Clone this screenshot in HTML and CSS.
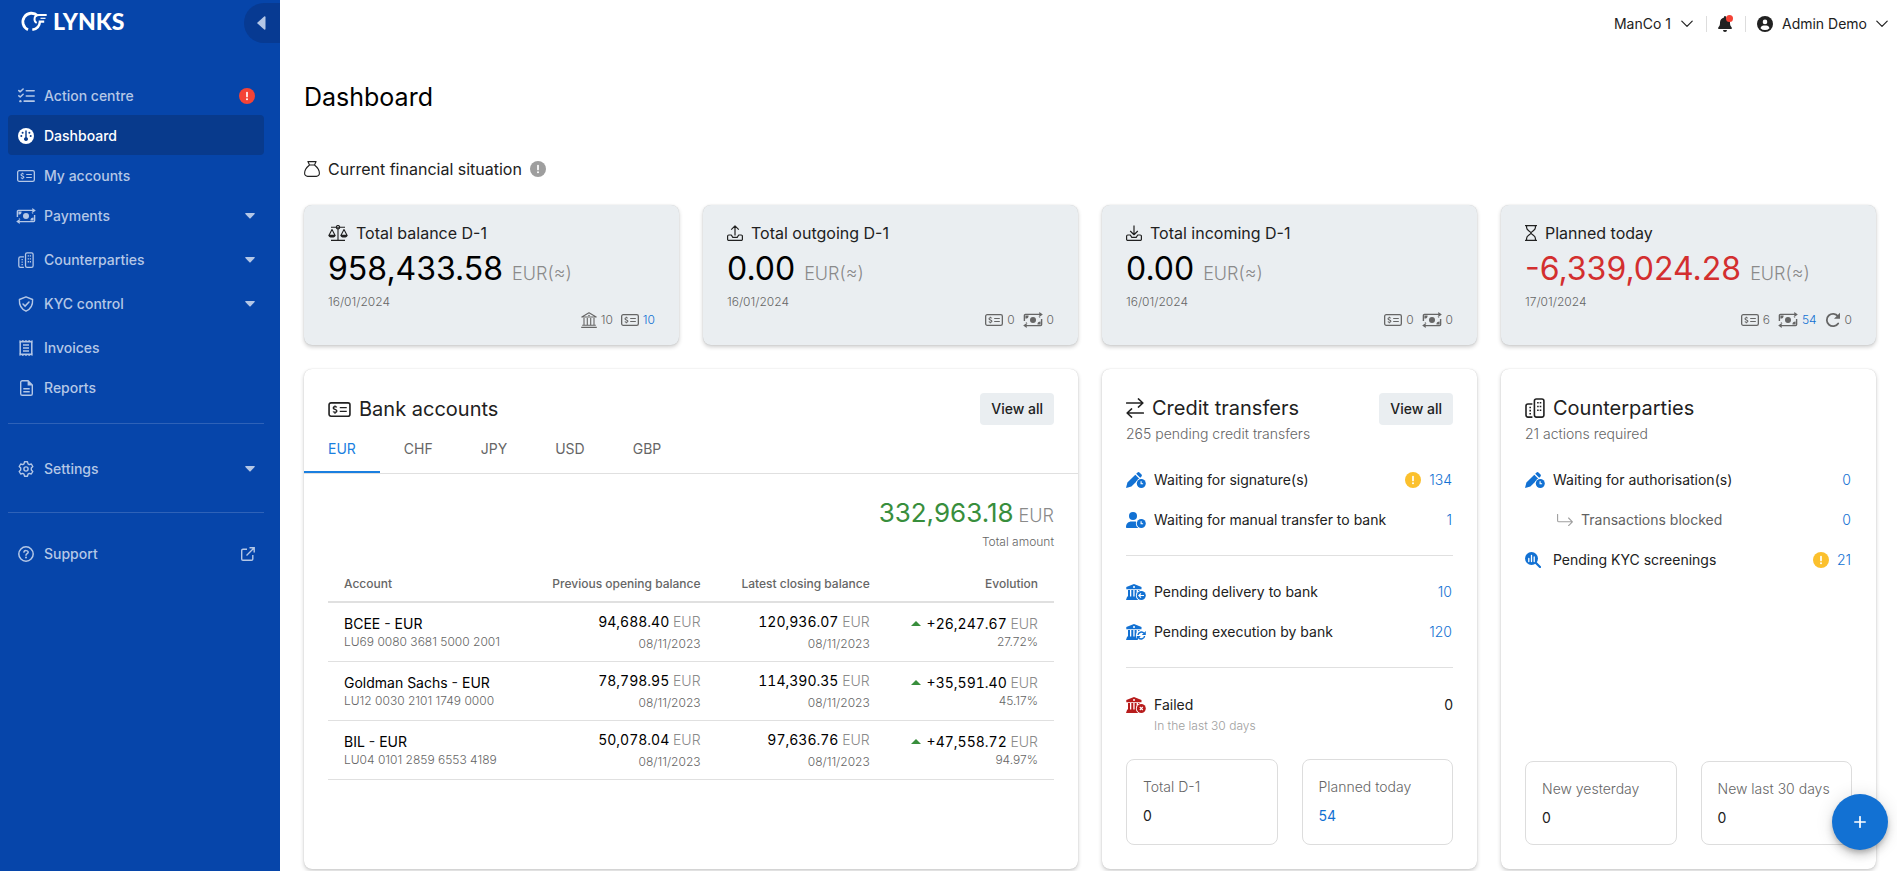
FILE: index.html
```html
<!DOCTYPE html>
<html lang="en">
<head>
<meta charset="utf-8">
<title>Lynks – Dashboard</title>
<link rel="stylesheet" href="styles.css">
</head>
<body>
<svg class="sprite" aria-hidden="true">
  <symbol id="i-tasks" viewBox="0 0 16 14"><g fill="none" stroke="currentColor" stroke-width="1.5" stroke-linecap="round" stroke-linejoin="round"><path d="M.8 2.4l1.3 1.1L4.8.9M.8 7.3l1.3 1.1 2.7-2.6M7.8 2.5h7.4M7.8 7.4h7.4M5.8 12.3h9.4"/></g><circle cx="2.3" cy="12.3" r="1.1" fill="currentColor"/></symbol>
  <symbol id="i-gauge" viewBox="0 0 16 16"><circle cx="8" cy="8" r="8" fill="currentColor"/><g fill="#083a8c"><circle cx="4.6" cy="4.7" r="1"/><circle cx="11.4" cy="4.7" r="1"/><circle cx="3.3" cy="8" r="1"/><circle cx="12.7" cy="8" r="1"/><path d="M7.3 2.6h1.4v6.6a2 2 0 1 1-1.4 0z"/></g></symbol>
  <symbol id="i-check" viewBox="0 0 18 12"><rect x=".65" y=".65" width="16.7" height="10.7" rx="1.6" fill="none" stroke="currentColor" stroke-width="1.3"/><path d="M6.8 4.3C6.3 3.5 4 3.5 4 4.8c0 1.3 2.9 1 2.9 2.4 0 1.3-2.5 1.3-3 .4M5.4 2.7v1.1M5.4 8.2v1.1M9.2 4.5h5.6M9.2 7.5h5.6" fill="none" stroke="currentColor" stroke-width="1.1"/></symbol>
  <symbol id="i-transfer" viewBox="0 0 20 16"><path d="M1.4 9V3.4a1 1 0 0 1 1-1H17M18.6 7v5.6a1 1 0 0 1-1 1H3" fill="none" stroke="currentColor" stroke-width="1.4"/><path d="M16.3 0l3.5 2.4-3.5 2.5zM3.7 16L.2 13.6l3.5-2.5zM2.4 3.4h3.2a3.2 3.2 0 0 1-3.2 3.2zM17.6 12.6h-3.2a3.2 3.2 0 0 1 3.2-3.2zM17.6 6a2 2 0 0 1-2-2zM2.4 10A2 2 0 0 1 4.400 12z" fill="currentColor"/><circle cx="10" cy="8" r="3" fill="currentColor"/></symbol>
  <symbol id="i-buildings" viewBox="0 0 20 20"><path d="M7.4 19.1H3a2 2 0 0 1-2-2V8a2 2 0 0 1 2-2h4.4M11.4 1h5.5a2 2 0 0 1 2 2v14.1a2 2 0 0 1-2 2h-5.5a2 2 0 0 1-2-2V3a2 2 0 0 1 2-2z" fill="none" stroke="currentColor" stroke-width="1.6"/><path d="M12.1 4h1.6v1.6h-1.6zM14.7 4h1.6v1.6h-1.6zM12.1 7.7h1.6v1.6h-1.6zM14.7 7.7h1.6v1.6h-1.6zM12.1 11.4h1.6V13h-1.6zM14.7 11.4h1.6V13h-1.6zM4.4 8.7H6v1.6H4.4zM4.4 11.8H6v1.6H4.4zM4.4 14.9H6v1.6H4.4z" fill="currentColor"/></symbol>
  <symbol id="i-shield" viewBox="0 0 16 16"><path d="M8 .8l6.6 2.7c.3 5-1.8 9.5-6.6 11.7C3.200 13 1.100 8.500 1.400 3.500z" fill="none" stroke="currentColor" stroke-width="1.4" stroke-linejoin="round"/><path d="M5 8l2.100 2.100L11 6" fill="none" stroke="currentColor" stroke-width="1.500" stroke-linecap="round"/></symbol>
  <symbol id="i-receipt" viewBox="0 0 14 16"><path d="M1.200 1.500V14.500M12.800 1.500V14.500M4 5h6M4 8h6M4 11h6" fill="none" stroke="currentColor" stroke-width="1.500"/><path d="M.5 0l1.700 1.100L3.800 0l1.600 1.100L7 0l1.600 1.100L10.200 0l1.600 1.100L13.500 0v2.400H.5zM.5 16l1.700-1.100L3.800 16l1.600-1.100L7 16l1.600-1.100 1.600 1.100 1.600-1.100 1.700 1.100v-2.400H.5z" fill="currentColor"/></symbol>
  <symbol id="i-file" viewBox="0 0 13 16"><path d="M8 .7H2.300A1.600 1.600 0 0 0 .7 2.300v11.400a1.600 1.600 0 0 0 1.600 1.600h8.400a1.600 1.600 0 0 0 1.600-1.600V5z" fill="none" stroke="currentColor" stroke-width="1.400"/><path d="M7.600.5v4.900h5z" fill="currentColor"/><path d="M3.300 8.700h6.400M3.300 11.700h6.400" stroke="currentColor" stroke-width="1.400"/></symbol>
  <symbol id="i-gear" viewBox="0 0 16 16"><path d="M6.500.8h3l.5 2 1.300.8 2-.6 1.500 2.500-1.500 1.500v2l1.500 1.500-1.500 2.500-2-.6-1.300.8-.5 2h-3l-.5-2-1.300-.8-2 .6L1.200 10.500 2.700 9V7L1.200 5.500 2.700 3l2 .6L6 2.800z" fill="none" stroke="currentColor" stroke-width="1.400" stroke-linejoin="round"/><circle cx="8" cy="8" r="2.100" fill="none" stroke="currentColor" stroke-width="1.400"/></symbol>
  <symbol id="i-question" viewBox="0 0 16 16"><circle cx="8" cy="8" r="7.200" fill="none" stroke="currentColor" stroke-width="1.500"/><path d="M5.900 6.100c.2-2 4.300-2 4.300.2C10.200 7.700 8 7.700 8 9.300" fill="none" stroke="currentColor" stroke-width="1.500" stroke-linecap="round"/><circle cx="8" cy="11.500" r="1" fill="currentColor"/></symbol>
  <symbol id="i-external" viewBox="0 0 14 14"><path d="M6 2.200H2a1.300 1.300 0 0 0-1.300 1.300V12A1.300 1.300 0 0 0 2 13.300h8.500a1.300 1.300 0 0 0 1.300-1.300V8M8.500.8h4.700v4.700M13 1L5.500 8.500" fill="none" stroke="currentColor" stroke-width="1.400"/></symbol>
  <symbol id="i-caret" viewBox="0 0 10 6"><path d="M.8 0h8.400q1 .2.4 1L5.600 5.300q-.6.500-1.200 0L.4 1Q-.2.200.8 0z" fill="currentColor"/></symbol>
  <symbol id="i-alert" viewBox="0 0 16 16"><circle cx="8" cy="8" r="8" fill="currentColor"/><path d="M8 4.500v4" stroke="#fff" stroke-width="1.700" stroke-linecap="round"/><circle cx="8" cy="11.200" r="1" fill="#fff"/></symbol>
  <symbol id="i-chevron" viewBox="0 0 12 8"><path d="M.8 1.200L6 6.400l5.200-5.200" fill="none" stroke="currentColor" stroke-width="1.200" stroke-linecap="round" stroke-linejoin="round"/></symbol>
  <symbol id="i-bell" viewBox="0 0 14 16"><path d="M7 0a1 1 0 0 0-1 1v.6C3.700 2.100 2 4.100 2 6.500v.7c0 1.500-.5 2.900-1.500 4l-.2.300A1 1 0 0 0 1 13h12a1 1 0 0 0 .7-1.500l-.2-.3c-1-1.100-1.500-2.500-1.500-4v-.7c0-2.400-1.700-4.400-4-4.900V1a1 1 0 0 0-1-1zM9 14H5a2 2 0 0 0 4 0z" fill="currentColor"/></symbol>
  <symbol id="i-user" viewBox="0 0 16 16"><circle cx="8" cy="8" r="8" fill="currentColor"/><circle cx="8" cy="5.900" r="2.300" fill="#fff"/><path d="M3.500 12.200c.5-1.700 1.600-2.700 3-2.700h3c1.400 0 2.500 1 3 2.700A6.200 6.200 0 0 1 8 14.100a6.200 6.200 0 0 1-4.500-1.900z" fill="#fff"/></symbol>
  <symbol id="i-sack" viewBox="0 0 16 16"><path d="M5.500 4L3.900.6h8.200L10.500 4zM5.500 4C3 6 .6 9 .6 12.300a3 3 0 0 0 3 3.100h8.800a3 3 0 0 0 3-3.100C15.400 9 13 6 10.500 4" fill="none" stroke="currentColor" stroke-width="1.100" stroke-linejoin="round"/></symbol>
  <symbol id="i-scale" viewBox="0 0 20 16"><g fill="none" stroke="currentColor" stroke-width="1.100" stroke-linejoin="round"><path d="M3 2.200h14M3 15.400h14M10 4v11.400M4 4.600L1 10.200h6zM16 4.600l-3 5.600h6z"/><circle cx="10" cy="2.200" r="1.700"/></g><path d="M.5 10h7a3.500 2.600 0 0 1-7 0zM12.500 10h7a3.500 2.600 0 0 1-7 0z" fill="currentColor"/></symbol>
  <symbol id="i-out" viewBox="0 0 16 16"><path d="M8 10.500V1M4.200 4.600L8 .9l3.800 3.700M4.300 10H1.800a1.200 1.200 0 0 0-1.200 1.200v3a1.200 1.200 0 0 0 1.200 1.200h12.400a1.200 1.200 0 0 0 1.200-1.200v-3a1.200 1.200 0 0 0-1.200-1.200h-2.500l-1.500 2.400H5.800z" fill="none" stroke="currentColor" stroke-width="1.200" stroke-linejoin="round"/></symbol>
  <symbol id="i-in" viewBox="0 0 16 16"><path d="M8 .4v9M4.200 6L8 9.700 11.800 6M4.300 10H1.800a1.200 1.200 0 0 0-1.200 1.200v3a1.200 1.200 0 0 0 1.200 1.200h12.400a1.200 1.200 0 0 0 1.200-1.200v-3a1.200 1.200 0 0 0-1.200-1.200h-2.500l-1.500 2.400H5.800z" fill="none" stroke="currentColor" stroke-width="1.200" stroke-linejoin="round"/></symbol>
  <symbol id="i-hourglass" viewBox="0 0 12 16"><path d="M0 .6h12M0 15.400h12M1.600.6v2.200C1.600 5.500 6 6.500 6 8s-4.400 2.500-4.400 5.200v2.200M10.400.6v2.200C10.400 5.500 6 6.500 6 8s4.400 2.500 4.400 5.200v2.200" fill="none" stroke="currentColor" stroke-width="1.200"/></symbol>
  <symbol id="i-bank" viewBox="0 0 16 16"><path d="M.8 5L8 .7 15.200 5zM1.200 13.200h13.600M.2 15.400h15.600M3 6v7M6.300 6v7M9.700 6v7M13 6v7" fill="none" stroke="currentColor" stroke-width="1.100" stroke-linejoin="round"/><circle cx="8" cy="3.500" r=".8" fill="currentColor"/></symbol>
  <symbol id="i-redo" viewBox="0 0 16 16"><path d="M13 4.300A6.200 6.200 0 1 0 13.200 11.400" fill="none" stroke="currentColor" stroke-width="1.800" stroke-linecap="round"/><path d="M15 .8v6H9z" fill="currentColor"/></symbol>
  <symbol id="i-exchange" viewBox="0 0 18 20"><path d="M.6 5h16.200M12.400.9L16.900 5l-4.500 4.100M17.400 15H1.200M5.600 10.900L1.100 15l4.500 4.100" fill="none" stroke="currentColor" stroke-width="1.500" stroke-linecap="round" stroke-linejoin="round"/></symbol>
  <symbol id="i-clock" viewBox="0 0 20 16"><circle cx="15.300" cy="11.500" r="5.400" fill="#fff"/><circle cx="15.300" cy="11.500" r="4.500" fill="currentColor"/><path d="M15.100 9.300v2.400h2" fill="none" stroke="#fff" stroke-width="1.100"/></symbol>
  <symbol id="i-pen-clock" viewBox="0 0 20 16"><path d="M1.400 10.500L9.300 2.700l4 4L5.400 14.500 0 16zM10.200 1.800l1.100-1.100a1.700 1.700 0 0 1 2.400 0l1.600 1.600a1.700 1.700 0 0 1 0 2.400l-1.100 1.100z" fill="currentColor"/><use href="#i-clock" width="20" height="16"/></symbol>
  <symbol id="i-user-clock" viewBox="0 0 20 16"><circle cx="7" cy="4" r="4" fill="currentColor"/><path d="M0 15c0-3.300 2.300-5.500 5.500-5.500h3c3 0 5.200 2.200 5.200 5.500 0 .6-.4 1-1 1H1c-.6 0-1-.4-1-1z" fill="currentColor"/><use href="#i-clock" width="20" height="16"/></symbol>
  <symbol id="i-bank-solid" viewBox="0 0 20 16"><path d="M8 0l7.500 3v2.200H.3V3zM2 6h2v6.500H2zM5.300 6h2v6.500h-2zM8.600 6h2v6.500h-2zM12 6h2v6.500h-2zM1.200 12.500h13l1.800 3.500H0z" fill="currentColor"/><circle cx="8" cy="3" r="1" fill="#fff"/></symbol>
  <symbol id="i-bank-arrow" viewBox="0 0 20 16"><use href="#i-bank-solid" width="20" height="16"/><circle cx="15.300" cy="11.500" r="5.400" fill="#fff"/><circle cx="15.300" cy="11.500" r="4.500" fill="currentColor"/><path d="M18 11.500h-5M15 9.300l-2.200 2.200 2.200 2.200" fill="none" stroke="#fff" stroke-width="1.100"/></symbol>
  <symbol id="i-bank-rotate" viewBox="0 0 20 16"><use href="#i-bank-solid" width="20" height="16"/><circle cx="15.300" cy="11.500" r="5.400" fill="#fff"/><path d="M12 11a3.400 3.400 0 0 1 6-1.700M18.600 12a3.400 3.400 0 0 1-6 1.700" fill="none" stroke="currentColor" stroke-width="1.500"/><path d="M19.800 7v4h-4zM10.800 16v-4h4z" fill="currentColor"/></symbol>
  <symbol id="i-bank-x" viewBox="0 0 20 16"><use href="#i-bank-solid" width="20" height="16"/><circle cx="15.300" cy="11.500" r="5.400" fill="#fff"/><circle cx="15.300" cy="11.500" r="4.500" fill="currentColor"/><path d="M13.800 10l3 3M16.800 10l-3 3" stroke="#fff" stroke-width="1.100"/></symbol>
  <symbol id="i-search-chart" viewBox="0 0 16 16"><path d="M10 10l5 5" stroke="currentColor" stroke-width="2.200" stroke-linecap="round"/><circle cx="6.500" cy="6.500" r="6.500" fill="currentColor"/><path d="M3.800 6.500v3M6.500 3.300v6.200M9.200 5v4.500" stroke="#fff" stroke-width="1.300" stroke-linecap="round"/></symbol>
  <symbol id="i-branch" viewBox="0 0 16 12"><path d="M.6.4v6a1.400 1.400 0 0 0 1.400 1.400h13.200M11.600 4l3.800 3.800-3.800 3.800" fill="none" stroke="currentColor" stroke-width="1.100" stroke-linecap="round" stroke-linejoin="round"/></symbol>
</svg>

<div class="app">
  <aside class="sidebar">
    <div class="brand-row">
      <a class="brand" href="#">
        <svg width="27" height="22" viewBox="0 0 27 22" aria-hidden="true"><g fill="none" stroke="#fff"><path d="M8 19.700A8.600 8.600 0 1 1 17.600 5.800" stroke-width="2.800"/><path d="M26.700 5H19c-3 0-4.500 1.700-4.500 4.200 0 2 .9 3 2.200 3.600" stroke-width="2"/><path d="M25.500 8.300h-5" stroke-width="1.200"/><path d="M24.200 11.600h-4.300c-.2 4.200-2.800 7.400-7.600 8.200" stroke-width="2.400"/></g></svg>
        <span>LYNKS</span>
      </a>
      <button class="collapse" aria-label="Collapse menu"><svg width="9" height="14" viewBox="0 0 9 14"><path d="M8.500 1.300v11.400q0 1.300-1.300.8L.5 7.600q-.6-.6 0-1.200L7.200.5q1.300-.5 1.300.8z" fill="currentColor"/></svg></button>
    </div>
    <nav class="nav" aria-label="Main">
      <a class="nav-item" href="#"><span class="nav-icon"><svg width="17" height="15"><use href="#i-tasks"/></svg></span>Action centre<svg class="nav-end badge-red" width="16" height="16"><use href="#i-alert"/></svg></a>
      <a class="nav-item active" href="#" aria-current="page"><span class="nav-icon"><svg width="16" height="16"><use href="#i-gauge"/></svg></span>Dashboard</a>
      <a class="nav-item" href="#"><span class="nav-icon"><svg width="18" height="12"><use href="#i-check"/></svg></span>My accounts</a>
      <a class="nav-item group" href="#"><span class="nav-icon"><svg width="20" height="16"><use href="#i-transfer"/></svg></span>Payments<svg class="nav-end" width="10" height="6"><use href="#i-caret"/></svg></a>
      <a class="nav-item group" href="#"><span class="nav-icon"><svg width="16" height="16"><use href="#i-buildings"/></svg></span>Counterparties<svg class="nav-end" width="10" height="6"><use href="#i-caret"/></svg></a>
      <a class="nav-item group" href="#"><span class="nav-icon"><svg width="16" height="16"><use href="#i-shield"/></svg></span>KYC control<svg class="nav-end" width="10" height="6"><use href="#i-caret"/></svg></a>
      <a class="nav-item" href="#"><span class="nav-icon"><svg width="14" height="16"><use href="#i-receipt"/></svg></span>Invoices</a>
      <a class="nav-item" href="#"><span class="nav-icon"><svg width="13" height="16"><use href="#i-file"/></svg></span>Reports</a>
      <hr class="nav-rule">
      <a class="nav-item group" href="#"><span class="nav-icon"><svg width="16" height="16"><use href="#i-gear"/></svg></span>Settings<svg class="nav-end" width="10" height="6"><use href="#i-caret"/></svg></a>
      <hr class="nav-rule last">
      <a class="nav-item" href="#"><span class="nav-icon"><svg width="16" height="16"><use href="#i-question"/></svg></span>Support<svg class="nav-end" width="14" height="14"><use href="#i-external"/></svg></a>
    </nav>
  </aside>

  <div class="page">
    <header class="topbar">
      <button class="top-btn">ManCo 1 <svg width="12" height="8"><use href="#i-chevron"/></svg></button>
      <span class="top-sep"></span>
      <button class="top-btn bell" aria-label="Notifications"><svg width="14" height="16"><use href="#i-bell"/></svg></button>
      <span class="top-sep"></span>
      <button class="top-btn account"><svg width="16" height="16"><use href="#i-user"/></svg><span>Admin Demo</span><svg width="12" height="8"><use href="#i-chevron"/></svg></button>
    </header>

    <main class="main">
      <h1>Dashboard</h1>
      <h2 class="section-title"><svg width="16" height="16"><use href="#i-sack"/></svg>Current financial situation<svg class="hint" width="16" height="16"><use href="#i-alert"/></svg></h2>

      <div class="grid">
        <section class="card stat">
          <h3><svg width="20" height="16"><use href="#i-scale"/></svg>Total balance D-1</h3>
          <p class="amount">958,433.58 <span>EUR(≈)</span></p>
          <p class="date">16/01/2024</p>
          <div class="counts"><span><svg width="16" height="16"><use href="#i-bank"/></svg>10</span><a href="#"><svg width="18" height="12"><use href="#i-check"/></svg>10</a></div>
        </section>
        <section class="card stat">
          <h3><svg width="16" height="16"><use href="#i-out"/></svg>Total outgoing D-1</h3>
          <p class="amount">0.00 <span>EUR(≈)</span></p>
          <p class="date">16/01/2024</p>
          <div class="counts"><span><svg width="18" height="12"><use href="#i-check"/></svg>0</span><span><svg width="20" height="16"><use href="#i-transfer"/></svg>0</span></div>
        </section>
        <section class="card stat">
          <h3><svg width="16" height="16"><use href="#i-in"/></svg>Total incoming D-1</h3>
          <p class="amount">0.00 <span>EUR(≈)</span></p>
          <p class="date">16/01/2024</p>
          <div class="counts"><span><svg width="18" height="12"><use href="#i-check"/></svg>0</span><span><svg width="20" height="16"><use href="#i-transfer"/></svg>0</span></div>
        </section>
        <section class="card stat">
          <h3><svg width="12" height="16"><use href="#i-hourglass"/></svg>Planned today</h3>
          <p class="amount negative">-6,339,024.28 <span>EUR(≈)</span></p>
          <p class="date">17/01/2024</p>
          <div class="counts"><span><svg width="18" height="12"><use href="#i-check"/></svg>6</span><a href="#"><svg width="20" height="16"><use href="#i-transfer"/></svg>54</a><span><svg width="16" height="16"><use href="#i-redo"/></svg>0</span></div>
        </section>

        <section class="card accounts">
          <div class="card-head">
            <h3 class="card-title"><svg width="23" height="15"><use href="#i-check"/></svg>Bank accounts</h3>
            <button class="view-all">View all</button>
          </div>
          <div class="tabs" role="tablist">
            <button class="tab selected" role="tab" aria-selected="true">EUR</button>
            <button class="tab" role="tab">CHF</button>
            <button class="tab" role="tab">JPY</button>
            <button class="tab" role="tab">USD</button>
            <button class="tab" role="tab">GBP</button>
          </div>
          <div class="total">
            <p class="total-value">332,963.18<span> EUR</span></p>
            <p class="total-label">Total amount</p>
          </div>
          <table>
            <thead><tr><th>Account</th><th>Previous opening balance</th><th>Latest closing balance</th><th>Evolution</th></tr></thead>
            <tbody>
              <tr>
                <td><div class="line"><a href="#">BCEE</a> - <a href="#">EUR</a></div><div class="sub">LU69 0080 3681 5000 2001</div></td>
                <td><div class="line num">94,688.40 <span>EUR</span></div><div class="sub spaced">08/11/2023</div></td>
                <td><div class="line num">120,936.07 <span>EUR</span></div><div class="sub spaced">08/11/2023</div></td>
                <td><div class="line num"><i class="up"></i>+26,247.67 <span>EUR</span></div><div class="sub">27.72%</div></td>
              </tr>
              <tr>
                <td><div class="line"><a href="#">Goldman Sachs</a> - <a href="#">EUR</a></div><div class="sub">LU12 0030 2101 1749 0000</div></td>
                <td><div class="line num">78,798.95 <span>EUR</span></div><div class="sub spaced">08/11/2023</div></td>
                <td><div class="line num">114,390.35 <span>EUR</span></div><div class="sub spaced">08/11/2023</div></td>
                <td><div class="line num"><i class="up"></i>+35,591.40 <span>EUR</span></div><div class="sub">45.17%</div></td>
              </tr>
              <tr>
                <td><div class="line"><a href="#">BIL</a> - <a href="#">EUR</a></div><div class="sub">LU04 0101 2859 6553 4189</div></td>
                <td><div class="line num">50,078.04 <span>EUR</span></div><div class="sub spaced">08/11/2023</div></td>
                <td><div class="line num">97,636.76 <span>EUR</span></div><div class="sub spaced">08/11/2023</div></td>
                <td><div class="line num"><i class="up"></i>+47,558.72 <span>EUR</span></div><div class="sub">94.97%</div></td>
              </tr>
            </tbody>
          </table>
        </section>

        <section class="card side">
          <div class="card-head">
            <div>
              <h3 class="card-title"><svg width="18" height="20"><use href="#i-exchange"/></svg>Credit transfers</h3>
              <p class="card-sub">265 pending credit transfers</p>
            </div>
            <button class="view-all">View all</button>
          </div>
          <ul class="rows">
            <li><svg class="row-icon" width="20" height="16"><use href="#i-pen-clock"/></svg>Waiting for signature(s)<svg class="warn" width="16" height="16"><use href="#i-alert"/></svg><a href="#">134</a></li>
            <li><svg class="row-icon" width="20" height="16"><use href="#i-user-clock"/></svg>Waiting for manual transfer to bank<a class="end" href="#">1</a></li>
          </ul>
          <ul class="rows ruled">
            <li><svg class="row-icon" width="20" height="16"><use href="#i-bank-arrow"/></svg>Pending delivery to bank<a class="end" href="#">10</a></li>
            <li><svg class="row-icon" width="20" height="16"><use href="#i-bank-rotate"/></svg>Pending execution by bank<a class="end" href="#">120</a></li>
          </ul>
          <ul class="rows ruled failures">
            <li><svg class="row-icon" width="20" height="16"><use href="#i-bank-x"/></svg>Failed<span class="end">0</span></li>
          </ul>
          <p class="failed-note">In the last 30 days</p>
          <div class="boxes">
            <div class="box"><p>Total D-1</p><strong>0</strong></div>
            <div class="box"><p>Planned today</p><a href="#">54</a></div>
          </div>
        </section>

        <section class="card side">
          <div class="card-head">
            <div>
              <h3 class="card-title"><svg width="20" height="20"><use href="#i-buildings"/></svg>Counterparties</h3>
              <p class="card-sub">21 actions required</p>
            </div>
          </div>
          <ul class="rows">
            <li><svg class="row-icon" width="20" height="16"><use href="#i-pen-clock"/></svg>Waiting for authorisation(s)<a class="end" href="#">0</a></li>
            <li class="nested"><svg class="branch" width="16" height="12"><use href="#i-branch"/></svg>Transactions blocked<a class="end" href="#">0</a></li>
            <li><svg class="row-icon search" width="16" height="16"><use href="#i-search-chart"/></svg>Pending KYC screenings<svg class="warn" width="16" height="16"><use href="#i-alert"/></svg><a href="#">21</a></li>
          </ul>
          <div class="boxes compact">
            <div class="box"><p>New yesterday</p><strong>0</strong></div>
            <div class="box"><p>New last 30 days</p><strong>0</strong></div>
          </div>
        </section>
      </div>
    </main>
  </div>
  <button class="fab" aria-label="Create"><svg width="12" height="12" viewBox="0 0 12 12"><path d="M6 .8v10.400M.8 6h10.400" stroke="#fff" stroke-width="1.700" stroke-linecap="round"/></svg></button>
</div>
</body>
</html>
```
FILE: styles.css
```css
* { box-sizing: border-box; }
body { margin: 0; font-family: Inter, "Noto Sans", sans-serif; font-size: 14px; line-height: 20px; color: #212121; background: #fff; }
h1, h2, h3, p, ul { margin: 0; padding: 0; font-weight: 400; }
ul { list-style: none; }
button { font: inherit; color: inherit; background: none; border: 0; padding: 0; cursor: pointer; }
a { color: #1271d3; text-decoration: none; }
svg { flex: none; display: block; }
.sprite { position: absolute; width: 0; height: 0; }

.app { display: flex; min-height: 100vh; }

.sidebar { width: 280px; flex: none; background: #0645aa; color: #b4c7e6; }
.brand-row { display: flex; justify-content: space-between; align-items: flex-start; height: 75px; padding: 3px 0 0 20px; }
.brand { display: flex; align-items: center; gap: 6px; height: 36px; color: #fff; font: 900 23px/36px Lato, sans-serif; }
.collapse { display: flex; align-items: center; width: 36px; height: 40px; padding-left: 13px; background: #073a92; border-radius: 20px 0 0 20px; color: #b4c7e6; }
.nav { padding: 0 16px 0 8px; }
.nav-item { display: flex; align-items: center; gap: 8px; height: 40px; padding: 1px 9px 0 8px; border-radius: 4px; color: #b4c7e6; font-weight: 500; }
.nav-icon { display: flex; justify-content: center; width: 20px; }
.nav-item.active { background: #083a8c; color: #fff; }
.nav-item.group { margin-bottom: 4px; }
.nav-end { margin-left: auto; }
.badge-red { color: #f44336; }
.nav-rule { height: 1px; margin: 16px 0 24px; border: 0; background: #2e62b8; }
.nav-rule.last { margin: 24px 0 20px; }

.page { flex: 1; min-width: 0; }
.topbar { display: flex; justify-content: flex-end; align-items: center; height: 48px; padding: 0 9px; }
.top-btn { display: flex; align-items: center; gap: 10px; }
.top-sep { width: 1px; height: 16px; margin: 0 11px 0 13px; background: #ddd; }
.top-sep + .bell { position: relative; }
.bell::after { content: ""; position: absolute; top: -1px; right: -1px; width: 7px; height: 7px; border-radius: 50%; background: #f44336; }
.account { gap: 9px; }

.main { padding: 32px 21px 0 24px; }
h1 { font-size: 25px; line-height: 34px; color: #000; margin-bottom: 43px; }
.section-title { display: flex; align-items: center; gap: 8px; font-size: 16px; line-height: 24px; margin-bottom: 24px; }
.hint { color: #9e9e9e; }
.grid { display: grid; grid-template-columns: repeat(4, minmax(0, 1fr)); gap: 24px; }
.card { border-radius: 8px; background: #fff; box-shadow: 0 2px 4px rgba(0, 0, 0, .2), 0 0 1px rgba(0, 0, 0, .2); }

.stat { padding: 16px 24px 15px; background: #eaeef1; }
.stat h3 { display: flex; align-items: center; gap: 8px; font-size: 16px; line-height: 24px; }
.amount { margin-top: 4px; font-size: 32px; line-height: 40px; color: #000; }
.amount span { font-size: 18px; font-weight: 300; color: #8a8a8a; }
.amount.negative { color: #d32f2f; }
.date { font-size: 12px; line-height: 16px; font-weight: 300; color: #666; }
.counts { display: flex; justify-content: flex-end; gap: 8px; margin: 2px 0; line-height: 16px; font-size: 12px; font-weight: 300; color: #666; }
.counts > * { display: flex; align-items: center; gap: 4px; }
.counts svg { color: #666; }

.accounts { grid-column: span 2; }
.card-head { display: flex; justify-content: space-between; align-items: flex-start; }
.accounts .card-head { align-items: center; padding: 24px 24px 0; }
.card-title { display: flex; align-items: center; gap: 8px; font-size: 20px; line-height: 30px; }
.card-sub { line-height: 22px; font-weight: 300; color: #666; }
.view-all { height: 32px; padding: 0 11px; border-radius: 4px; background: #eaeef1; font-weight: 500; }
.tabs { display: flex; border-bottom: 1px solid #e0e0e0; }
.tab { height: 48px; padding: 0 24px; color: #666; }
.tab.selected { color: #1a7fe0; box-shadow: inset 0 -2px #1a7fe0; }
.total { padding: 22px 24px 0; text-align: right; }
.total-value { font-size: 26px; line-height: 34px; color: #388e3c; }
.total-value span { font-size: 18px; font-weight: 300; color: #8a8a8a; }
.total-label { margin-top: 1px; font-size: 12px; line-height: 16px; font-weight: 300; color: #666; }

.accounts table { width: calc(100% - 48px); margin: 17px 24px 0; border-collapse: separate; border-spacing: 0; }
th, td { text-align: right; padding: 9px 16px; border-bottom: 1px solid #e0e0e0; }
th:first-child, td:first-child { text-align: left; }
th { border-bottom-width: 2px; font-size: 12px; line-height: 16px; font-weight: 500; color: #666; }
.line a { color: #000; }
.num { font-variant-numeric: tabular-nums; color: #000; }
.line span { font-weight: 300; color: #8a8a8a; }
.sub { font-size: 12px; line-height: 16px; font-weight: 300; color: #666; }
.spaced { margin-top: 4px; }
.up { display: inline-block; vertical-align: 3px; margin-right: 6px; border: solid transparent; border-width: 0 5px 5px; border-bottom-color: #388e3c; }

.side { display: flex; flex-direction: column; padding: 24px; min-height: 500px; }
.rows { margin-top: 15px; }
.rows li { display: flex; align-items: center; gap: 8px; height: 40px; }
.rows a { font-weight: 300; padding-right: 1px; }
.rows.ruled { padding-top: 16px; border-top: 1px solid #e0e0e0; }
.rows.failures { padding-top: 24px; }
.failures li { height: 26px; }
.row-icon { color: #1271d3; }
.row-icon.search { margin-right: 4px; }
.end, .warn { margin-left: auto; }
.warn { color: #fbc02d; }
.failures .row-icon { color: #b71c1c; }
.failed-note { padding-left: 28px; font-size: 12px; line-height: 16px; font-weight: 300; color: #9e9e9e; }
.nested { padding-left: 32px; color: #616161; }
.branch { color: #9e9e9e; }
.boxes { display: grid; grid-template-columns: repeat(2, minmax(0, 1fr)); gap: 24px; margin-top: auto; }
.box { padding: 17px 16px 18px; border: 1px solid #ddd; border-radius: 8px; }
.compact .box { padding: 17px 16px 16px; }
.box p { margin-bottom: 9px; font-weight: 300; color: #666; white-space: nowrap; }
.box strong, .box a { display: block; font-weight: 400; }

.fab { position: fixed; right: 9px; bottom: 21px; width: 56px; height: 56px; display: flex; align-items: center; justify-content: center; border-radius: 50%; background: #1271d3; box-shadow: 0 3px 5px -1px rgba(0, 0, 0, .2), 0 6px 10px rgba(0, 0, 0, .14), 0 1px 18px rgba(0, 0, 0, .12); }
```
